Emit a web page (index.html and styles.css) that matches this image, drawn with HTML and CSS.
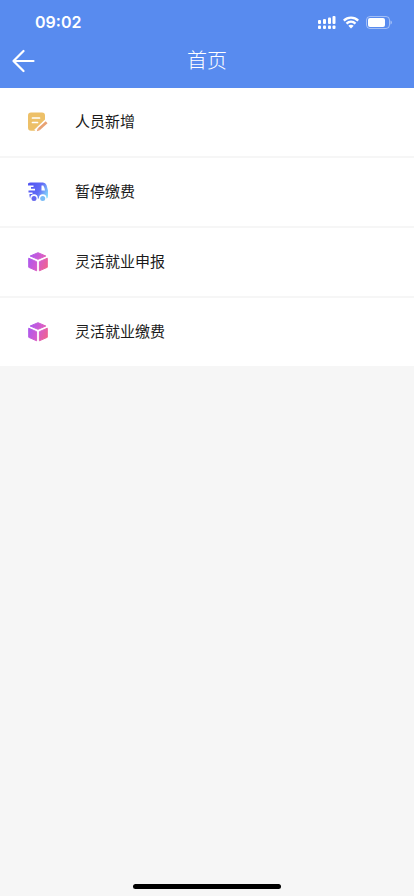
FILE: index.html
```html
<!DOCTYPE html>
<html lang="zh-CN">
<head>
<meta charset="utf-8">
<meta name="viewport" content="width=device-width, initial-scale=1">
<title>首页</title>
<link rel="stylesheet" href="styles.css">
</head>
<body>
<svg class="defs" aria-hidden="true">
  <defs>
    <linearGradient id="van" gradientUnits="userSpaceOnUse" x1="2" y1="4" x2="20" y2="13">
      <stop offset="0" stop-color="#5357f3"/><stop offset="0.5" stop-color="#626cf6"/><stop offset="1" stop-color="#86dcfb"/>
    </linearGradient>
    <linearGradient id="cube" gradientUnits="userSpaceOnUse" x1="1" y1="6" x2="20" y2="14">
      <stop offset="0" stop-color="#ac58ee"/><stop offset="0.5" stop-color="#d45cce"/><stop offset="1" stop-color="#f0648c"/>
    </linearGradient>
    <symbol id="box" viewBox="0 0 20 20">
      <g fill="url(#cube)" stroke="url(#cube)" stroke-width="1" stroke-linejoin="round">
        <path d="M10 .7 17.800 4 10 7.300 2.200 4Z"/>
        <path d="M.7 6.200 8.600 9.700V18.800L.7 15.300Z"/>
        <path d="M19.300 6.200 11.400 9.700V18.800L19.300 15.300Z"/>
      </g>
    </symbol>
  </defs>
</svg>
<header class="header">
  <div class="status">
    <span class="time">09:02</span>
    <div class="signals">
      <svg width="18" height="13" viewBox="0 0 18 13" fill="#fff" aria-hidden="true">
        <rect x="0" y="4" width="3" height="4" rx="1"/><rect x="5" y="3" width="3" height="5" rx="1"/><rect x="10" y="1.500" width="3" height="6.500" rx="1"/><rect x="14.500" y="0" width="3" height="8" rx="1"/>
        <rect x="0" y="9.500" width="3" height="3.500" rx="1"/><rect x="5" y="9.500" width="3" height="3.500" rx="1"/><rect x="10" y="9.500" width="3" height="3.500" rx="1"/><rect x="14.500" y="9.500" width="3" height="3.500" rx="1"/>
      </svg>
      <svg width="16" height="13" viewBox="0 0 16 13" fill="none" stroke="#fff" stroke-width="2.300" aria-hidden="true">
        <path d="M.8 4.600C4.900.6 11.100.6 15.200 4.600M3.500 7.600C6.100 5.100 9.900 5.100 12.500 7.600"/>
        <path d="M8 12.600 5.300 9.800C6.900 8.400 9.100 8.400 10.700 9.800Z" fill="#fff" stroke="none"/>
      </svg>
      <svg width="26" height="13" viewBox="0 0 26 13" aria-hidden="true">
        <rect x=".5" y=".5" width="23" height="12" rx="3.500" fill="none" stroke="#fff" stroke-opacity=".45"/>
        <rect x="2" y="2" width="17" height="9" rx="2" fill="#fff"/>
        <path d="M24.500 4.500C26.300 5.200 26.300 7.800 24.500 8.500Z" fill="#fff" fill-opacity=".5"/>
      </svg>
    </div>
  </div>
  <div class="nav">
    <button class="back" type="button" aria-label="返回">
      <svg width="24" height="24" viewBox="0 0 24 24" fill="none" stroke="#fff" stroke-width="2.200" stroke-linecap="round" stroke-linejoin="round" aria-hidden="true"><path d="M11.500 2 1.500 12 11.500 22M1.500 12H21.500"/></svg>
    </button>
    <h1 class="title">首页</h1>
  </div>
</header>
<main>
  <nav class="menu">
    <a class="item" href="#add">
      <svg class="icon" viewBox="0 0 20 20" aria-hidden="true">
        <path d="M3 .5H14Q17 .5 17 3.500V8.500L7.500 18.800H3Q0 18.800 0 15.800V3.500Q0 .5 3 .5Z" fill="#edc068"/>
        <path d="M4.500 6H11.500M4.500 10.500H9.500" stroke="#fff" stroke-width="1.700" stroke-linecap="round"/>
        <path d="M8 19.500 19 9" stroke="#fff" stroke-width="5"/>
        <path d="M10.800 17.200 18.600 10.300" stroke="#e8a273" stroke-width="2.800"/>
        <path d="M8.800 19.200 9.800 16.200 11.800 18.300Z" fill="#e8a273"/>
      </svg>
      <span>人员新增</span>
    </a>
    <a class="item" href="#pause">
      <svg class="icon" viewBox="0 0 20 20" aria-hidden="true">
        <path d="M2.500 .5H15Q17.500 .5 18.500 3L20 8.500V14Q20 16.500 18 16.500H3.500Q1.500 16.500 1.500 14V12H4.500V10.500H.5V8.500H7V6.800H3V5H5.500V3.500H0V1.500Q1 .5 2.500 .5Z" fill="url(#van)"/>
        <path d="M13.500 3.500H15.300Q16.500 5.500 17 8.500H13.500Z" fill="#fff"/>
        <circle cx="6" cy="16" r="3.800" fill="#fff"/><circle cx="14.700" cy="16" r="3.800" fill="#fff"/>
        <circle cx="6" cy="16.500" r="2.500" fill="#6669ee"/><circle cx="14.700" cy="16.500" r="2.500" fill="#7bbcf6"/>
      </svg>
      <span>暂停缴费</span>
    </a>
    <a class="item" href="#declare">
      <svg class="icon" aria-hidden="true"><use href="#box"/></svg>
      <span>灵活就业申报</span>
    </a>
    <a class="item" href="#pay">
      <svg class="icon" aria-hidden="true"><use href="#box"/></svg>
      <span>灵活就业缴费</span>
    </a>
  </nav>
</main>
<div class="home-bar"></div>
</body>
</html>
```
FILE: styles.css
```css
* {
  box-sizing: border-box;
}

body {
  display: flex;
  flex-direction: column;
  min-height: 100vh;
  margin: 0;
  background: #f6f6f6;
  color: #1a1a1a;
  font-family: Inter, "Noto Sans CJK SC", sans-serif;
}

.defs {
  position: absolute;
  width: 0;
  height: 0;
}

.header {
  background: #588bef;
  color: #fff;
}

.status {
  display: flex;
  align-items: center;
  justify-content: space-between;
  height: 44px;
  padding: 0 22px 0 35px;
}

.time {
  font-size: 16px;
  font-weight: 600;
  line-height: 20px;
}

.signals {
  display: flex;
  align-items: center;
  gap: 7px;
}

.nav {
  display: grid;
  grid-template-columns: 48px 1fr 48px;
  align-items: center;
  height: 44px;
  padding-bottom: 11px;
}

.back {
  display: flex;
  padding: 0 0 0 12px;
  border: 0;
  background: none;
}

.title {
  margin: 0;
  font-size: 20px;
  font-weight: 300;
  line-height: 24px;
  text-align: center;
}

main {
  flex: 1;
}

.menu {
  display: grid;
  gap: 2px;
}

.item {
  display: flex;
  align-items: center;
  gap: 27px;
  height: 68px;
  padding: 0 28px;
  background: #fff;
  color: inherit;
  font-size: 15px;
  line-height: 22px;
  text-decoration: none;
}

.icon {
  width: 20px;
  height: 20px;
}

.home-bar {
  width: 148px;
  height: 5px;
  margin: 0 auto 7px;
  border-radius: 3px;
  background: #000;
}
```
